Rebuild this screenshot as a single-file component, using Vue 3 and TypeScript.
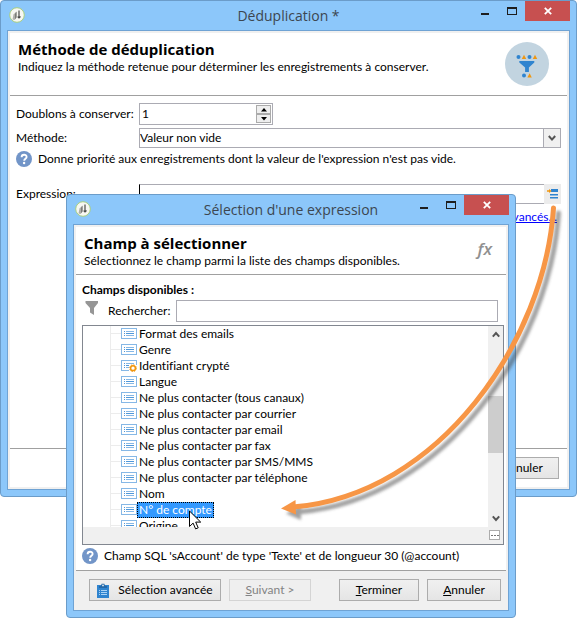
<script setup lang="ts">
import { ref } from 'vue'

interface Field {
  label: string
  computed?: boolean
}

const fields: Field[] = [
  { label: 'Format des emails' },
  { label: 'Genre' },
  { label: 'Identifiant crypté', computed: true },
  { label: 'Langue' },
  { label: 'Ne plus contacter (tous canaux)' },
  { label: 'Ne plus contacter par courrier' },
  { label: 'Ne plus contacter par email' },
  { label: 'Ne plus contacter par fax' },
  { label: 'Ne plus contacter par SMS/MMS' },
  { label: 'Ne plus contacter par téléphone' },
  { label: 'Nom' },
  { label: 'N° de compte' },
  { label: 'Origine' },
]

const selected = ref('N° de compte')
const keep = ref(1)
const method = ref('Valeur non vide')
const expression = ref('')
const search = ref('')
</script>

<template>
  <main class="desktop">
    <section class="window window-main" aria-labelledby="title-main">
      <header class="titlebar">
        <svg class="app-icon" viewBox="0 0 16 16" aria-hidden="true">
          <circle cx="8" cy="8" r="7.3" fill="#f7f7f2" stroke="#a9cf7e" />
          <path d="M3.500 12.500l1-5L7 5v6.500L5.500 13z" fill="#b0b0ab" />
          <path d="M6 12V6.500l1.700-2v6z" fill="#7d7d79" />
          <path d="M10 3.500v7M8.600 9.600l1.400 1.300 1.500-1.400" fill="none" stroke="#4a4a48" stroke-width="1.200" />
        </svg>
        <h1 id="title-main" class="title">Déduplication *</h1>
        <div class="controls">
          <button class="ctl" type="button" aria-label="Réduire"><i class="min"></i></button>
          <button class="ctl" type="button" aria-label="Agrandir"><i class="max"></i></button>
          <button class="ctl close" type="button" aria-label="Fermer">
            <svg viewBox="0 0 8 8"><path d="M.8.8l6.4 6.4M7.2.8.8 7.2" stroke="#fff" stroke-width="1.8" /></svg>
          </button>
        </div>
      </header>
      <div class="client">
        <div class="banner banner-main">
          <div>
            <h2>Méthode de déduplication</h2>
            <p>Indiquez la méthode retenue pour déterminer les enregistrements à conserver.</p>
          </div>
          <svg class="badge" viewBox="0 0 44 44" aria-hidden="true">
            <circle cx="22" cy="22" r="22" fill="#c2d4e0" />
            <g fill="#2f84cf">
              <circle cx="13.5" cy="15" r="2" />
              <circle cx="24.5" cy="15" r="2" />
              <circle cx="19" cy="33.4" r="2" />
              <path d="M14.3 19h15v1.6l-5.4 4.8V30h-3.8v-4.6l-5.8-4.8z" />
            </g>
            <g fill="#f0960f">
              <path d="M19 12.8l2.2 4.2h-4.4z" />
              <path d="M30 12.8l2.2 4.2h-4.4z" />
              <path d="M24.6 31.2l2.2 4.2h-4.4z" />
            </g>
          </svg>
        </div>
        <form class="form" @submit.prevent>
          <div class="field">
            <label for="keep">Doublons à conserver:</label>
            <div class="spin">
              <input id="keep" v-model="keep" type="text" inputmode="numeric" />
              <div class="steps">
                <button type="button" aria-label="Augmenter" @click="keep++">
                  <svg viewBox="0 0 6 4"><path d="M3 0l3 3.5H0z" /></svg>
                </button>
                <button type="button" aria-label="Diminuer" @click="keep--">
                  <svg viewBox="0 0 6 4"><path d="M3 3.5L0 0h6z" /></svg>
                </button>
              </div>
            </div>
          </div>
          <div class="field">
            <label for="method">Méthode:</label>
            <div class="combo">
              <select id="method" v-model="method">
                <option>Valeur non vide</option>
              </select>
              <span class="drop">
                <svg viewBox="0 0 8 7"><path d="M.8 1L4 4.6 7.2 1" /></svg>
              </span>
            </div>
          </div>
          <p class="hint">
            <svg class="help" viewBox="0 0 16 16" aria-hidden="true">
              <circle cx="8" cy="8" r="8" fill="#7295c8" />
              <path d="M5.6 6.2c0-3.2 5-3.1 5-.3 0 1.9-2.4 1.8-2.4 3.8" fill="none" stroke="#fff" stroke-width="1.9" />
              <circle cx="8.1" cy="12" r="1.2" fill="#fff" />
            </svg>
            Donne priorité aux enregistrements dont la valeur de l'expression n'est pas vide.
          </p>
          <div class="field expression">
            <label for="expression">Expression:</label>
            <div class="picker">
              <input id="expression" v-model="expression" type="text" />
              <button type="button" aria-label="Modifier l'expression">
                <svg viewBox="0 0 12 12">
                  <path d="M4 1h7v3H4zM3 6h8v1.6H3zM3 9h8v1.4H3z" fill="#2f84cf" />
                  <path d="M0 2.2h2V1l2.6 2L2 5V3.8H0z" fill="#f0960f" />
                </svg>
              </button>
            </div>
          </div>
          <a class="advanced" href="#">Paramètres avancés...</a>
        </form>
        <footer class="main-actions">
          <button class="btn" type="button"><span><u>A</u>nnuler</span></button>
        </footer>
      </div>
    </section>

    <section class="window window-dialog" role="dialog" aria-labelledby="title-dialog">
      <header class="titlebar">
        <svg class="app-icon" viewBox="0 0 16 16" aria-hidden="true">
          <circle cx="8" cy="8" r="7.3" fill="#f7f7f2" stroke="#a9cf7e" />
          <path d="M3.500 12.500l1-5L7 5v6.500L5.500 13z" fill="#b0b0ab" />
          <path d="M6 12V6.500l1.700-2v6z" fill="#7d7d79" />
          <path d="M10 3.500v7M8.600 9.600l1.400 1.300 1.500-1.400" fill="none" stroke="#4a4a48" stroke-width="1.200" />
        </svg>
        <h1 id="title-dialog" class="title">Sélection d'une expression</h1>
        <div class="controls">
          <button class="ctl" type="button" aria-label="Réduire"><i class="min"></i></button>
          <button class="ctl" type="button" aria-label="Agrandir"><i class="max"></i></button>
          <button class="ctl close" type="button" aria-label="Fermer">
            <svg viewBox="0 0 8 8"><path d="M.8.8l6.4 6.4M7.2.8.8 7.2" stroke="#fff" stroke-width="1.8" /></svg>
          </button>
        </div>
      </header>
      <div class="client">
        <div class="banner banner-dialog">
          <div>
            <h2>Champ à sélectionner</h2>
            <p>Sélectionnez le champ parmi la liste des champs disponibles.</p>
          </div>
          <span class="fx">fx</span>
        </div>
        <div class="panel">
          <h3>Champs disponibles :</h3>
          <div class="search">
            <svg class="funnel" viewBox="0 0 14 14" aria-hidden="true">
              <path d="M.5 0h12.500v2L9 7v7L5 11.500V7L.5 2z" fill="#969696" />
            </svg>
            <label for="search">Rechercher:</label>
            <input id="search" v-model="search" type="text" />
          </div>
          <div class="tree">
            <ul class="rows" role="listbox" aria-label="Champs disponibles">
              <li
                v-for="f in fields"
                :key="f.label"
                class="row"
                role="option"
                :aria-selected="f.label === selected"
                @click="selected = f.label"
              >
                <i class="branch"></i>
                <svg class="node" viewBox="0 0 16 12" aria-hidden="true">
                  <rect x=".5" y=".5" width="15" height="10" fill="#fff" stroke="#86b8e6" />
                  <path d="M3 3.5h1M3 5.5h1M3 7.5h1" stroke="#4f98da" />
                  <path d="M5 3.5h8M5 7.5h8" stroke="#86b8e6" />
                  <path d="M5 5.5h8" stroke="#4f98da" />
                  <template v-if="f.computed">
                    <path d="M8 5h8v7H8z" fill="#fff" />
                    <circle cx="12" cy="8.2" r="2.4" fill="#fff" stroke="#f0960f" stroke-width="1.5" />
                    <circle cx="12" cy="8.2" r="3.4" fill="none" stroke="#f0960f" stroke-width="1" stroke-dasharray="1.4 1.27" />
                  </template>
                </svg>
                <span class="name" :class="{ active: f.label === selected }">{{ f.label }}</span>
              </li>
            </ul>
            <div class="scroll">
              <svg viewBox="0 0 8 7"><path d="M.8 5.6L4 2l3.2 3.6" /></svg>
              <i class="thumb"></i>
              <svg viewBox="0 0 8 7"><path d="M.8 1.4L4 5l3.2-3.6" /></svg>
            </div>
            <div class="tray">
              <button type="button" aria-label="Options"><i></i><i></i><i></i></button>
            </div>
          </div>
          <p class="hint">
            <svg class="help" viewBox="0 0 16 16" aria-hidden="true">
              <circle cx="8" cy="8" r="8" fill="#7295c8" />
              <path d="M5.6 6.2c0-3.2 5-3.1 5-.3 0 1.9-2.4 1.8-2.4 3.8" fill="none" stroke="#fff" stroke-width="1.9" />
              <circle cx="8.1" cy="12" r="1.2" fill="#fff" />
            </svg>
            Champ SQL 'sAccount' de type 'Texte' et de longueur 30 (@account)
          </p>
        </div>
        <footer class="dialog-actions">
          <button class="btn wide" type="button">
            <svg class="clip" viewBox="0 0 12 15" aria-hidden="true">
              <path d="M0 2h12v13H0z" fill="#2f84cf" />
              <path d="M2 5V3h2l.6-2.2h2.8L8 3h2v2z" fill="#2468a8" />
              <circle cx="6" cy="2.4" r=".9" fill="#f0f0f0" />
              <path d="M2 7.5h1M2 9.5h1M2 11.5h1M4 7.5h6M4 9.5h6M4 11.5h6" stroke="#a9d2f5" />
            </svg>
            <span>Sélection avancée</span>
          </button>
          <button class="btn next" type="button" disabled><span><u>S</u>uivant &gt;</span></button>
          <button class="btn finish" type="button"><span><u>T</u>erminer</span></button>
          <button class="btn" type="button"><span><u>A</u>nnuler</span></button>
        </footer>
      </div>
    </section>

    <svg class="arrow" viewBox="270 195 312 335" aria-hidden="true">
      <defs>
        <filter id="soft" x="-10%" y="-10%" width="120%" height="120%">
          <feGaussianBlur stdDeviation="1.5" />
        </filter>
      </defs>
      <g transform="translate(5 5)" opacity=".5" filter="url(#soft)">
        <path d="M553.500 208C545 340 440 495 293 507" fill="none" stroke="#444" stroke-width="5" stroke-linecap="round" />
        <path d="M281 508.500L296 500v15z" fill="#444" />
      </g>
      <path d="M553.500 208C545 340 440 495 293 507" fill="none" stroke="#f79646" stroke-width="5" stroke-linecap="round" />
      <path d="M281 508.500L295.500 500l.5 14.500z" fill="#f79646" />
    </svg>

    <svg class="cursor" viewBox="0 0 13 20" aria-hidden="true">
      <path d="M.5 1v15.500l3.600-3.400 2.500 5.800 2.600-1.100-2.500-5.700h5z" fill="#fff" stroke="#000" />
    </svg>
  </main>
</template>

<style>
body {
  margin: 0;
  background: #fff;
}
</style>

<style scoped>
* {
  box-sizing: border-box;
}

.desktop {
  position: relative;
  min-height: 618px;
  overflow: hidden;
  font: 12px/16px Lato, 'Open Sans', sans-serif;
  font-variant-ligatures: none;
  color: #000;
}

h1,
h2,
h3,
p,
ul {
  margin: 0;
  padding: 0;
}

input,
select,
button {
  font: inherit;
  color: inherit;
  border-radius: 0;
  outline: none;
}

button {
  padding: 0;
}

.window {
  position: absolute;
  padding: 0 6px 6px;
  border: 1px solid #6b9cc9;
  border-radius: 4px;
  background: #8cc7fa;
}

.window-main {
  left: 0;
  right: 5px;
  top: 0;
}

.window-dialog {
  left: 66px;
  right: 66px;
  top: 194px;
}

.titlebar {
  display: grid;
  grid-template-columns: 99px 1fr 99px;
  height: 29px;
}

.app-icon {
  width: 16px;
  height: 16px;
  margin: 6px 0 0 2px;
}

.title {
  align-self: center;
  font-family: 'Open Sans', sans-serif;
  font-size: 14px;
  line-height: 20px;
  font-weight: 400;
  text-align: center;
  white-space: nowrap;
  color: #3c4650;
}

.controls {
  display: flex;
  justify-content: flex-end;
}

.ctl {
  display: flex;
  align-items: flex-start;
  justify-content: center;
  width: 27px;
  height: 20px;
  border: 0;
  background: none;
}

.close {
  align-items: center;
  width: 45px;
  background: #c75050;
}

.close svg {
  width: 8px;
  height: 8px;
}

.min {
  width: 8px;
  height: 2px;
  margin: 12px 0 0;
  background: #1e1e1e;
}

.max {
  width: 10px;
  height: 8px;
  margin: 6px 0 0;
  border: 1px solid #1e1e1e;
  border-top-width: 2px;
}

.client {
  padding: 2px;
  border: 1px solid #6fa3d4;
  background: #f0f0f0;
}

.banner {
  display: flex;
  justify-content: space-between;
  border-bottom: 1px solid #a0a0a0;
  background: #fff;
  white-space: nowrap;
}

.banner h2 {
  font-family: 'Open Sans', sans-serif;
  font-size: 15px;
  line-height: 20px;
  font-weight: 700;
}

.banner-main {
  height: 63px;
  padding: 6px 18px 0 8px;
}

.badge {
  width: 44px;
  height: 44px;
  margin-top: 3px;
}

.banner-dialog {
  height: 48px;
  padding: 6px 14px 0 8px;
}

.fx {
  padding-top: 6px;
  font-family: 'Open Sans', sans-serif;
  font-size: 17px;
  line-height: 20px;
  font-style: italic;
  font-weight: 600;
  color: #909090;
}

.form {
  display: flex;
  flex-direction: column;
  gap: 3px;
  min-height: 352px;
  padding: 7px 6px;
  background: #fff;
}

.field {
  display: grid;
  grid-template-columns: 123px 1fr;
  align-items: center;
  white-space: nowrap;
}

.spin {
  display: flex;
  width: 134px;
  height: 22px;
  padding: 1px;
  border: 1px solid #ababb3;
}

.spin input {
  flex: 1;
  min-width: 0;
  padding: 0 1px;
  border: 0;
}

.steps {
  display: flex;
  flex-direction: column;
  width: 15px;
}

.steps button {
  display: flex;
  flex: 1;
  align-items: center;
  justify-content: center;
  border: 1px solid #ababab;
  background: #efefef;
}

.steps svg {
  width: 6px;
  height: 4px;
}

.combo {
  display: grid;
  grid-template-columns: 1fr 17px;
  height: 20px;
  border: 1px solid #ababb3;
}

.combo select {
  grid-area: 1 / 1 / 2 / 3;
  padding: 0 17px 0 0;
  border: 0;
  background: none;
  appearance: none;
}

.drop {
  display: flex;
  grid-area: 1 / 2 / 2 / 3;
  align-items: center;
  justify-content: center;
  border-left: 1px solid #ababb3;
  background: #f0f0f0;
  pointer-events: none;
}

.drop svg,
.scroll svg {
  width: 8px;
  height: 7px;
  fill: none;
  stroke: #555;
  stroke-width: 2;
}

.hint {
  display: flex;
  align-items: center;
  gap: 6px;
  white-space: nowrap;
}

.help {
  width: 16px;
  height: 16px;
}

.expression {
  padding-top: 14px;
}

.picker {
  display: flex;
  height: 20px;
}

.picker input {
  flex: 1;
  min-width: 0;
  border: solid #ababb3;
  border-width: 1px 0 1px 1px;
  border-left-color: #000;
}

.picker button {
  display: flex;
  align-items: center;
  justify-content: center;
  width: 17px;
  border: 0;
  background: #ececec;
}

.picker button svg {
  width: 12px;
  height: 12px;
}

.advanced {
  align-self: flex-end;
  margin: 2px 4px 0 0;
  color: #00f;
}

.main-actions {
  display: flex;
  justify-content: flex-end;
  padding: 8px 8px;
  border-top: 1px solid #a0a0a0;
  background: #fff;
}

.btn {
  display: flex;
  align-items: center;
  justify-content: center;
  width: 74px;
  height: 22px;
  border: 1px solid #acacac;
  background: linear-gradient(#f0f0f0, #e5e5e5);
  white-space: nowrap;
}

.btn:disabled {
  border-color: #d4d4d4;
  background: #efefef;
  color: #838383;
}

.panel {
  padding: 7px 2px 6px 6px;
  background: #fff;
}

.panel h3 {
  font-size: 12px;
  line-height: 16px;
  font-weight: 700;
}

.search {
  display: flex;
  align-items: center;
  height: 22px;
  margin: 2px 6px 3px 3px;
}

.funnel {
  align-self: flex-start;
  width: 14px;
  height: 14px;
  margin: 1px 9px 0 0;
}

.search label {
  width: 68px;
}

.search input {
  flex: 1;
  min-width: 0;
  height: 22px;
  border: 1px solid #ababb3;
}

.tree {
  display: grid;
  grid-template: 201px 17px / 1fr 15px;
  border: 1px solid #828790;
}

.rows {
  overflow: hidden;
  list-style: none;
}

.row {
  display: flex;
  align-items: center;
  height: 16px;
  padding-left: 27px;
  white-space: nowrap;
}

.branch {
  align-self: stretch;
  width: 11px;
  border-left: 1px solid #ececec;
  background: linear-gradient(#ececec, #ececec) 0 7px / 100% 1px no-repeat;
}

.node {
  width: 16px;
  height: 12px;
}

.name {
  padding: 0 2px;
}

.name.active {
  background: #3399ff;
  outline: 1px dotted #000;
  outline-offset: -1px;
  color: #fff;
}

.scroll {
  display: flex;
  flex-direction: column;
  align-items: center;
  padding: 5px 0;
  background: #f0f0f0;
}

.thumb {
  width: 15px;
  height: 57px;
  margin: 58px 0 auto;
  background: #cdcdcd;
}

.tray {
  display: flex;
  grid-column: 1 / 3;
  justify-content: flex-end;
  padding: 3px 3px;
  background: #f0f0f0;
}

.tray button {
  display: flex;
  align-items: center;
  justify-content: center;
  gap: 1px;
  width: 11px;
  height: 10px;
  border: 1px solid #acacac;
  background: #fff;
}

.tray i {
  width: 2px;
  height: 1px;
  background: #777;
}

.panel .hint {
  margin-top: 3px;
}

.dialog-actions {
  display: flex;
  gap: 8px;
  padding: 8px 5px 7px 13px;
  border-top: 1px solid #a0a0a0;
}

.wide {
  gap: 9px;
  width: 132px;
}

.clip {
  width: 12px;
  height: 15px;
}

.next {
  width: 82px;
}

.finish {
  width: 80px;
  margin-left: auto;
}

.arrow {
  position: absolute;
  left: 270px;
  top: 195px;
  width: 312px;
  height: 335px;
  pointer-events: none;
}

.cursor {
  position: absolute;
  left: 189px;
  top: 510px;
  width: 13px;
  height: 20px;
}
</style>
